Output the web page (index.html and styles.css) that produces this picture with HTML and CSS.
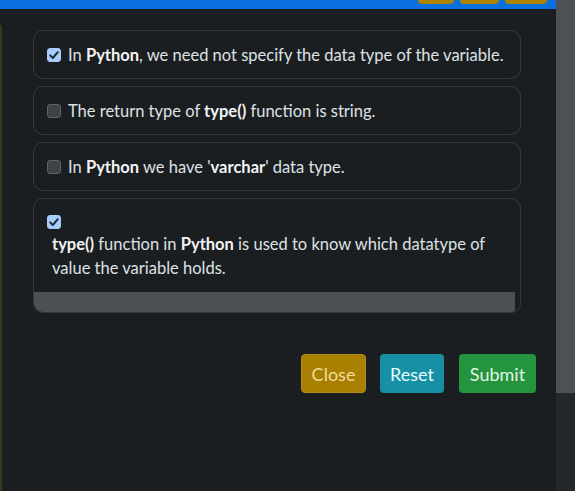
FILE: index.html
```html
<!DOCTYPE html>
<html>
<head>
<meta charset="utf-8">
<link rel="stylesheet" href="styles.css">
</head>
<body>
<div class="page">
  <div class="main">
    <div class="topbar">
      <span class="tb-btn b1"></span>
      <span class="tb-btn b2"></span>
      <span class="tb-btn b3"></span>
    </div>
    <div class="content">
      <div class="options">
        <label class="card">
          <span class="cb checked"><svg viewBox="0 0 14 14" width="14" height="14"><path d="M3.2 7.4 L5.8 10 L10.8 4.2" fill="none" stroke="#1f2a36" stroke-width="2" stroke-linecap="round" stroke-linejoin="round"/></svg></span>
          <span class="txt">In <b>Python</b>, we need not specify the data type of the variable.</span>
        </label>
        <label class="card">
          <span class="cb"></span>
          <span class="txt">The return type of <b>type()</b> function is string.</span>
        </label>
        <label class="card">
          <span class="cb"></span>
          <span class="txt">In <b>Python</b> we have '<b>varchar</b>' data type.</span>
        </label>
        <div class="card tall">
          <div class="tall-body">
            <span class="cb checked"><svg viewBox="0 0 14 14" width="14" height="14"><path d="M3.2 7.4 L5.8 10 L10.8 4.2" fill="none" stroke="#1f2a36" stroke-width="2" stroke-linecap="round" stroke-linejoin="round"/></svg></span>
            <p class="para"><b>type()</b> function in <b>Python</b> is used to know which datatype of value the variable holds.</p>
          </div>
          <div class="hscroll"></div>
        </div>
      </div>
      <div class="actions">
        <button class="btn close">Close</button>
        <button class="btn reset">Reset</button>
        <button class="btn submit">Submit</button>
      </div>
    </div>
  </div>
  <div class="vscroll"><div class="thumb"></div></div>
</div>
</body>
</html>
```
FILE: styles.css
```css
* { box-sizing: border-box; }
html, body { margin: 0; padding: 0; }
body {
  background: #1b1e20;
  font-family: "Segoe UI", "Lato", "Noto Sans", sans-serif;
  color: #dee2e6;
  width: 575px;
  height: 491px;
  overflow: hidden;
}
.page { display: flex; height: 491px; }
.main { width: 556px; display: flex; flex-direction: column; }
.topbar {
  height: 9px;
  background: #0b6fdf;
  display: flex;
  align-items: flex-start;
  padding-left: 418px;
}
.tb-btn {
  height: 4px;
  background: #ad8300;
  border-radius: 0 0 4px 4px;
}
.b1 { width: 36px; }
.b2 { width: 39px; margin-left: 6px; }
.b3 { width: 42px; margin-left: 6px; }
.content {
  flex: 1;
  border-left: 2px solid #3a3916;
  margin-top: 16px;
  padding: 5px 0 0 31px;
}
.options { width: 488px; display: flex; flex-direction: column; gap: 7px; }
.card {
  border: 1px solid #363a3d;
  border-radius: 10px;
  display: flex;
  align-items: center;
  height: 49px;
  padding: 1px 0 0 13px;
  font-size: 16.5px;
}
.card .cb { margin-top: -1px; }
.card b { font-weight: 700; color: #f1f3f5; }
.cb {
  width: 14px;
  height: 14px;
  border-radius: 3px;
  background: #3e4246;
  border: 1px solid #5e6368;
  flex: none;
  margin-right: 7px;
  display: flex;
}
.cb.checked { background: #a6cdfc; border-color: #a6cdfc; }
.cb svg { margin: -1px; }
.card.tall {
  height: 115px;
  display: block;
  padding: 0;
  overflow: hidden;
}
.tall-body { padding: 17px 0 0 13px; height: 93px; }
.para { margin: 3px 0 0 5px; line-height: 24px; width: 450px; }
.hscroll { height: 21px; width: 481px; background: #4b5055; }
.actions {
  width: 503px;
  display: flex;
  justify-content: flex-end;
  gap: 14px;
  margin-top: 41px;
}
.btn {
  height: 39px;
  border: 1px solid transparent;
  border-radius: 4px;
  font-family: inherit;
  font-size: 18px;
  padding: 0;
  text-align: center;
}
.close { width: 65px; background: #a97f01; color: #f0dd9a; border-color: #b08a1a; }
.reset { width: 64px; background: #1790a6; color: #e6fbff; }
.submit { width: 77px; margin-left: 1px; background: #24943e; color: #e0f5e5; }
.vscroll { width: 19px; background: #25282b; }
.thumb { height: 393px; background: #4d5156; }
```
